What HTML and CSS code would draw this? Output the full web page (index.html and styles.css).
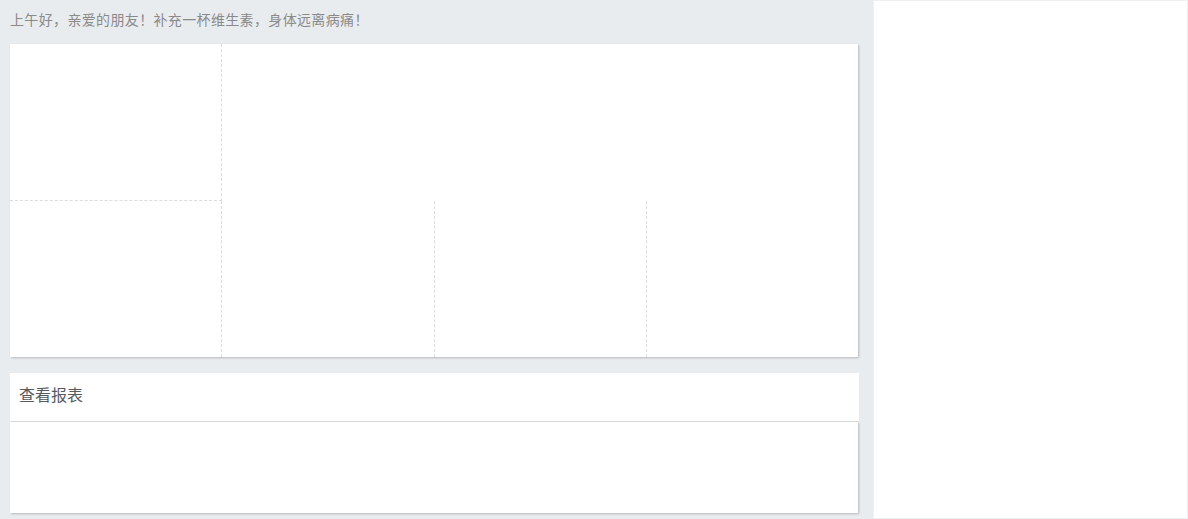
FILE: index.html
```html
<!DOCTYPE html>
<html lang="zh-CN">
<head>
<meta charset="utf-8">
<title>首页</title>
<link rel="stylesheet" href="styles.css">
</head>
<body>
<div class="page">
  <main class="main">
    <div class="greeting">上午好，亲爱的朋友！补充一杯维生素，身体远离病痛！</div>
    <section class="card stats">
      <div class="cell c-tl"></div>
      <div class="cell c-tr"></div>
      <div class="cell c-b1"></div>
      <div class="cell c-b2"></div>
      <div class="cell c-b3"></div>
      <div class="cell c-b4"></div>
    </section>
    <section class="report">
      <div class="report-head">查看报表</div>
      <div class="report-body"></div>
    </section>
  </main>
  <aside class="side"></aside>
</div>
</body>
</html>
```
FILE: styles.css
```css
html, body {
  margin: 0;
  padding: 0;
  background: #ffffff;
  font-family: "Noto Sans CJK SC", "Noto Sans", sans-serif;
}
.page {
  display: flex;
  width: 1188px;
  height: 519px;
  overflow: hidden;
}
.main {
  width: 863px;
  flex: none;
  background: #e9ecef;
  padding: 0 0 0 10px;
  display: flex;
  flex-direction: column;
}
.greeting {
  height: 44px;
  line-height: 39px;
  font-size: 14px;
  letter-spacing: 0.35px;
  color: #8a8a8a;
}
.card {
  background: #fff;
  box-shadow: 1px 1px 2px rgba(0, 0, 0, 0.22);
}
.stats {
  width: 848px;
  height: 313px;
  display: grid;
  grid-template-columns: 212px 213px 212px 211px;
  grid-template-rows: 157px 156px;
}
.cell {
  box-sizing: border-box;
}
.c-tl {
  border-right: 1px dashed #dcdcdc;
  border-bottom: 1px dashed #dcdcdc;
}
.c-tr {
  grid-column: 2 / 5;
}
.c-b1, .c-b2, .c-b3 {
  border-right: 1px dashed #dcdcdc;
}
.report {
  margin-top: 16px;
  width: 849px;
}
.report-head {
  height: 49px;
  background: #fff;
  border-bottom: 1px solid #dcdcdc;
  box-sizing: border-box;
  padding-left: 9px;
  font-size: 16px;
  line-height: 42px;
  color: #555a60;
}
.report-body {
  width: 848px;
  height: 91px;
  background: #fff;
  box-shadow: 1px 1px 2px rgba(0, 0, 0, 0.22);
}
.side {
  flex: 1;
  background: #fff;
  border: 1px solid #eef0f2;
  box-sizing: border-box;
}
```
